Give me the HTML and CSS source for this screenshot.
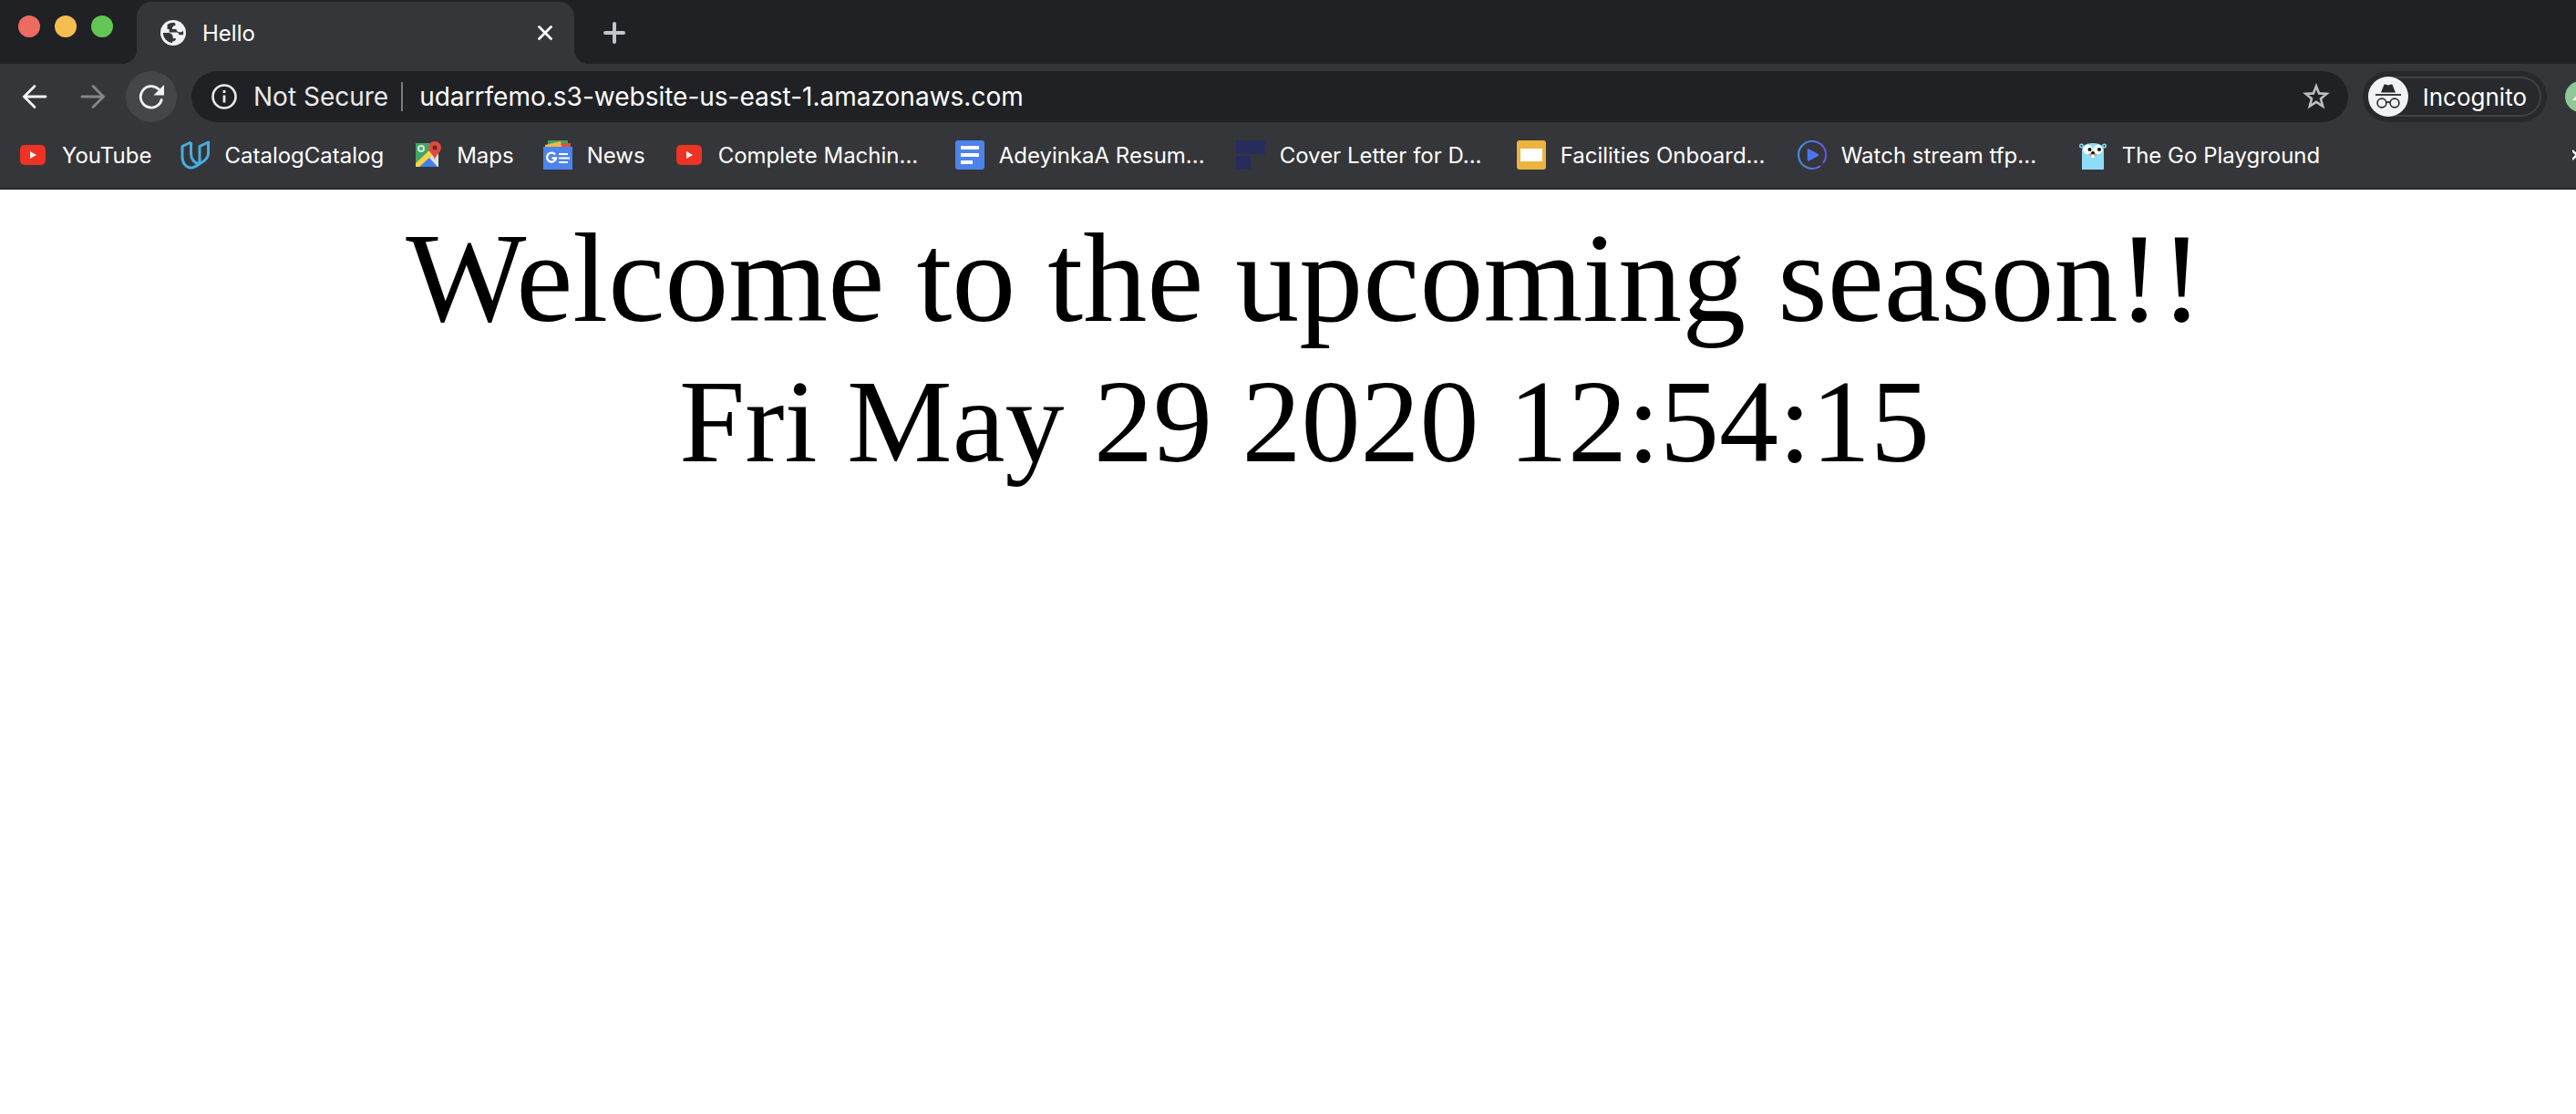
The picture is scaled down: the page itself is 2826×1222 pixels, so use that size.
FILE: index.html
```html
<!DOCTYPE html>
<html lang="en">
<head>
<meta charset="utf-8">
<title>Hello</title>
<link rel="stylesheet" href="styles.css">
</head>
<body>
<header class="chrome">
  <div class="tab-strip">
    <div class="lights">
      <button class="light light-close" aria-label="Close window"></button>
      <button class="light light-min" aria-label="Minimise window"></button>
      <button class="light light-max" aria-label="Zoom window"></button>
    </div>
    <div class="tab">
      <svg class="favicon" viewBox="2 2 20 20" aria-hidden="true"><circle cx="12" cy="12" r="10" fill="#f1f3f4"/><path fill="#35363a" d="M4 12h3.600c2.500 0 4.200 1.300 4.200 3.300v1h2.300c0 1.500-.8 2.500-2.800 2.500v1.200A8 8 0 0 1 4 12zM12.600 4a8 8 0 0 0-5.200 1.600v3.600h1.500v2.400h5.600c1.500 0 2 .7 2 2h3.300c.3-1.300.2-2.400 0-3.200-.8.8-2 1.300-3.200 1.100-1.300-.2-1.900-1.100-2.200-2.300h-3.200c0-1.900.8-3 2.500-3V5c0-.4-.3-.6-1.100-1z"/></svg>
      <span class="tab-title">Hello</span>
      <button class="icon-button tab-close" aria-label="Close tab"><svg width="16" height="16" viewBox="0 0 16 16"><path d="M1.500 1.500l13 13M14.500 1.500l-13 13" stroke="#fff" stroke-width="2.800" stroke-linecap="round"/></svg></button>
    </div>
    <button class="icon-button new-tab" aria-label="New tab"><svg width="24" height="24" viewBox="0 0 24 24"><path d="M12 2v20M2 12h20" stroke="#c3c4cb" stroke-width="4" stroke-linecap="round"/></svg></button>
  </div>

  <div class="toolbar">
    <nav class="nav-buttons" aria-label="History">
      <button class="icon-button nav-button" aria-label="Back"><svg width="28" height="28" viewBox="0 0 28 28"><path d="M26 14H3M14 2.500L2.500 14 14 25.500" fill="none" stroke="#f1f3f4" stroke-width="2.800" stroke-linecap="round"/></svg></button>
      <button class="icon-button nav-button" aria-label="Forward"><svg width="28" height="28" viewBox="0 0 28 28"><path d="M2 14h23M14 2.500L25.500 14 14 25.500" fill="none" stroke="#858689" stroke-width="2.800" stroke-linecap="round"/></svg></button>
      <button class="icon-button nav-button reload" aria-label="Reload"><svg width="28" height="28" viewBox="0 0 28 28"><path d="M22 5.800A11.700 11.700 0 1 0 25.200 17.500" fill="none" stroke="#f1f3f4" stroke-width="2.800" stroke-linecap="round"/><path d="M28 1v11.500H16.500z" fill="#f1f3f4"/></svg></button>
    </nav>
    <form class="omnibox">
      <svg class="info" width="28" height="28" viewBox="0 0 28 28" aria-hidden="true"><circle cx="14" cy="14" r="12.500" fill="none" stroke="#e8eaed" stroke-width="2.600"/><path d="M14 12.500v8M14 7v3" stroke="#e8eaed" stroke-width="2.800"/></svg>
      <label class="security" for="address">Not Secure</label>
      <input class="address" id="address" type="text" value="udarrfemo.s3-website-us-east-1.amazonaws.com">
      <button class="icon-button star" type="button" aria-label="Bookmark this page"><svg width="30" height="30" viewBox="0 0 30 30"><path d="M15 3.500l3.100 7.900 8.400.5-6.500 5.400 2.200 8.300-7.200-4.700-7.200 4.700 2.200-8.300L3.500 11.900l8.400-.5z" fill="none" stroke="#bdbec0" stroke-width="2.600"/></svg></button>
    </form>
    <button class="incognito">
      <span class="incognito-inner">
        <svg width="44" height="44" viewBox="0 0 44 44" aria-hidden="true"><circle cx="22" cy="22" r="22" fill="#f1f3f4"/><path d="M14 17.500l3-7.500c.4-1.200 1.300-1.700 2.400-1.300l2.600.8 2.600-.8c1.100-.4 2 .1 2.400 1.300l3 7.500z" fill="#28292d"/><path d="M8 20h28" stroke="#28292d" stroke-width="1.800"/><g fill="none" stroke="#28292d" stroke-width="1.600"><circle cx="15" cy="29" r="4.900"/><circle cx="29" cy="29" r="4.900"/><path d="M20 28.500q2-1.200 4 0"/></g></svg>
        <span>Incognito</span>
      </span>
    </button>
    <button class="icon-button update" aria-label="Update browser"><svg width="12" height="34" viewBox="0 0 12 34"><circle cx="17" cy="17" r="17" fill="#8fc796"/><path d="M8 21l9-10v10z" fill="#fff"/></svg></button>
  </div>

  <nav class="bookmarks" aria-label="Bookmarks">
    <a class="bookmark" href="#"><svg viewBox="0 0 32 32"><rect x="2" y="5" width="28" height="22" rx="5" fill="#ee3224"/><path d="M13 12l7 4-7 4z" fill="#fff"/></svg><span>YouTube</span></a>
    <a class="bookmark" href="#"><svg viewBox="0 0 32 32" fill="none" stroke="#46aee0" stroke-width="3" stroke-linejoin="round"><path d="M11.500 2L2 6.500V18c0 7 4 12 10 12 3 0 5-1.500 8.500-4 5.500-3 10-6 10-11V2L21 6.500V25.500M11.500 2v12c0 6 3.500 10.500 9 12"/></svg><span>CatalogCatalog</span></a>
    <a class="bookmark" href="#"><svg viewBox="0 0 32 32"><path d="M3 3h25v26H3z" fill="#e0e2e4"/><path d="M3 3h20v10L3 28z" fill="#44a566"/><path d="M3 25L19 10l4 5L8 29H3z" fill="#f5d445"/><path d="M7 29l11-10 9 10z" fill="#4580ea"/><circle cx="9" cy="9" r="3" fill="none" stroke="#d5eadb" stroke-width="2"/><path d="M24 21c-1-5-7-8-7-13a7 7 0 0 1 14 0c0 5-6 8-7 13z" fill="#dc4b3e"/><circle cx="24" cy="8" r="2.500" fill="#75241e"/></svg><span>Maps</span></a>
    <a class="bookmark" href="#"><svg viewBox="0 0 32 32"><path d="M5 0h22v8H5z" fill="#43a15a"/><path d="M17 4l13-1v6H17z" fill="#dc5140"/><path d="M2 5l17-4 1 7H2z" fill="#f2ba42"/><path d="M0 7h32v25H0z" fill="#4c83ee"/><path d="M13 15.500a5 5 0 1 0 1 4H9.500" fill="none" stroke="#fff" stroke-width="2.400"/><path d="M17 15h10M17 19.500h12M17 24h10" stroke="#fff" stroke-width="2.200"/></svg><span>News</span></a>
    <a class="bookmark long" href="#"><svg viewBox="0 0 32 32"><rect x="2" y="5" width="28" height="22" rx="5" fill="#ee3224"/><path d="M13 12l7 4-7 4z" fill="#fff"/></svg><span>Complete Machin...</span></a>
    <a class="bookmark long" href="#"><svg viewBox="0 0 32 32"><rect width="32" height="32" rx="3" fill="#4d83ea"/><path d="M6 8h20M6 16h20M6 24h13" stroke="#fff" stroke-width="4"/></svg><span>AdeyinkaA Resum...</span></a>
    <a class="bookmark long" href="#"><svg viewBox="0 0 32 32"><path d="M0 0h32v15H0zM0 17h16v15H0z" fill="#262d5d"/></svg><span>Cover Letter for D...</span></a>
    <a class="bookmark long" href="#"><svg viewBox="0 0 32 32"><rect width="32" height="32" rx="3" fill="#eab43f"/><path d="M4 9h24v14H4z" fill="#fff"/></svg><span>Facilities Onboard...</span></a>
    <a class="bookmark long" href="#"><svg viewBox="0 0 32 32"><defs><linearGradient id="ring"><stop stop-color="#3f94ec"/><stop offset="1" stop-color="#6459e8"/></linearGradient></defs><path d="M24.500 28.300A15 15 0 1 1 28.500 24.300" fill="none" stroke="url(#ring)" stroke-width="2" stroke-linecap="round"/><path d="M12 10.500l10 5.500-10 5.500z" fill="#4b76ed" stroke="#4b76ed" stroke-width="2.500" stroke-linejoin="round"/></svg><span>Watch stream tfp...</span></a>
    <a class="bookmark long" href="#"><svg viewBox="0 0 32 32"><circle cx="3.500" cy="6" r="1.800" fill="#35363a" stroke="#8eddf8" stroke-width="1.400"/><circle cx="28.500" cy="6" r="1.800" fill="#35363a" stroke="#8eddf8" stroke-width="1.400"/><path d="M4 32V11c0-5 4-8 12-8s12 3 12 8v21z" fill="#8eddf8"/><circle cx="10.500" cy="10" r="5.200" fill="#fff"/><circle cx="21.500" cy="10" r="5.200" fill="#fff"/><circle cx="12.500" cy="10" r="2" fill="#111"/><circle cx="23" cy="10" r="2" fill="#111"/><ellipse cx="16" cy="15.500" rx="4" ry="2" fill="#c39a80"/><path d="M14.500 16h3v3h-3z" fill="#fff"/><ellipse cx="16" cy="13.500" rx="2" ry="1.500" fill="#111"/></svg><span>The Go Playground</span></a>
    <button class="icon-button more" aria-label="More bookmarks"><svg width="4" height="12" viewBox="0 0 4 12"><path d="M0 1l5 5-5 5" fill="none" stroke="#fff" stroke-width="2.400"/></svg></button>
  </nav>
</header>
<main class="page">
  <h1 class="welcome">Welcome to the upcoming season!!</h1>
  <p class="date">Fri May 29 2020 12:54:15</p>
</main>
</body>
</html>
```
FILE: styles.css
```css
* {
  box-sizing: border-box;
}

body {
  margin: 0;
  background: #fff;
  font-family: Inter, "Liberation Sans", sans-serif;
}

button {
  padding: 0;
  border: 0;
  background: none;
  color: inherit;
  font: inherit;
}

svg {
  display: block;
  flex: none;
}

.chrome {
  background: #35363a;
  border-bottom: 2px solid #28292c;
  color: #fff;
  font-size: 24px;
}

.icon-button {
  display: flex;
  align-items: center;
  justify-content: center;
  flex: none;
}

/* Tab strip */
.tab-strip {
  display: flex;
  height: 70px;
  padding-top: 2px;
  background: #202124;
}

.lights {
  display: flex;
  gap: 16px;
  width: 150px;
  padding: 15px 0 0 20px;
}

.light {
  width: 24px;
  height: 24px;
  border-radius: 50%;
}

.light-close { background: #ed6b60; }
.light-min { background: #f6be50; }
.light-max { background: #62c655; }

.tab {
  position: relative;
  display: flex;
  align-items: center;
  gap: 18px;
  width: 480px;
  padding: 0 24px 0 26px;
  border-radius: 16px 16px 0 0;
  background: #35363a;
}

.tab::before,
.tab::after {
  content: "";
  position: absolute;
  bottom: 0;
  width: 16px;
  height: 16px;
}

.tab::before {
  right: 100%;
  background: radial-gradient(circle at 0 0, #202124 16px, #35363a 16px);
}

.tab::after {
  left: 100%;
  background: radial-gradient(circle at 100% 0, #202124 16px, #35363a 16px);
}

.favicon {
  width: 28px;
  height: 28px;
}

.tab-title {
  flex: 1;
}

.tab-close {
  width: 16px;
}

.new-tab {
  width: 24px;
  margin-left: 32px;
}

/* Toolbar */
.toolbar {
  display: flex;
  align-items: center;
  gap: 16px;
  padding-top: 8px;
}

.nav-buttons {
  display: flex;
  gap: 8px;
  padding-left: 10px;
}

.nav-button {
  width: 56px;
  height: 56px;
  border-radius: 50%;
}

.reload {
  background: #454649;
}

.omnibox {
  display: flex;
  align-items: center;
  flex: 1;
  height: 56px;
  padding: 0 20px 0 22px;
  border-radius: 28px;
  background: #202124;
  font-size: 28px;
}

.security {
  margin-left: 18px;
  padding-right: 14px;
  border-right: 2px solid #7b7c7f;
  line-height: 32px;
  color: #e8eaed;
}

.address {
  flex: 1;
  min-width: 0;
  padding: 0 0 0 18px;
  border: 0;
  background: none;
  color: #fff;
  font: inherit;
}

.incognito {
  height: 56px;
  padding: 6px;
  border-radius: 28px;
  background: #28292d;
  font-size: 26px;
}

.incognito-inner {
  display: flex;
  align-items: center;
  gap: 16px;
  height: 44px;
  padding-right: 16px;
  border-radius: 22px;
  box-shadow: inset 0 0 0 2px #414246;
}

.update {
  margin-left: 4px;
}

/* Bookmarks */
.bookmarks {
  display: flex;
  align-items: center;
  gap: 32px;
  height: 72px;
  padding-left: 20px;
}

.bookmark {
  display: flex;
  align-items: center;
  gap: 16px;
  color: #fff;
  text-decoration: none;
  white-space: nowrap;
}

.bookmark svg {
  width: 32px;
  height: 32px;
}

.long {
  width: 276px;
}

.more {
  margin-left: auto;
}

/* Page */
.page {
  padding: 16px 0 0 36px;
  font-family: "Liberation Serif", serif;
  text-align: center;
}

.welcome,
.date {
  margin: 0;
  font-weight: 400;
}

.welcome {
  font-size: 140px;
  line-height: 162px;
}

.date {
  font-size: 130px;
  line-height: 152px;
}
```
